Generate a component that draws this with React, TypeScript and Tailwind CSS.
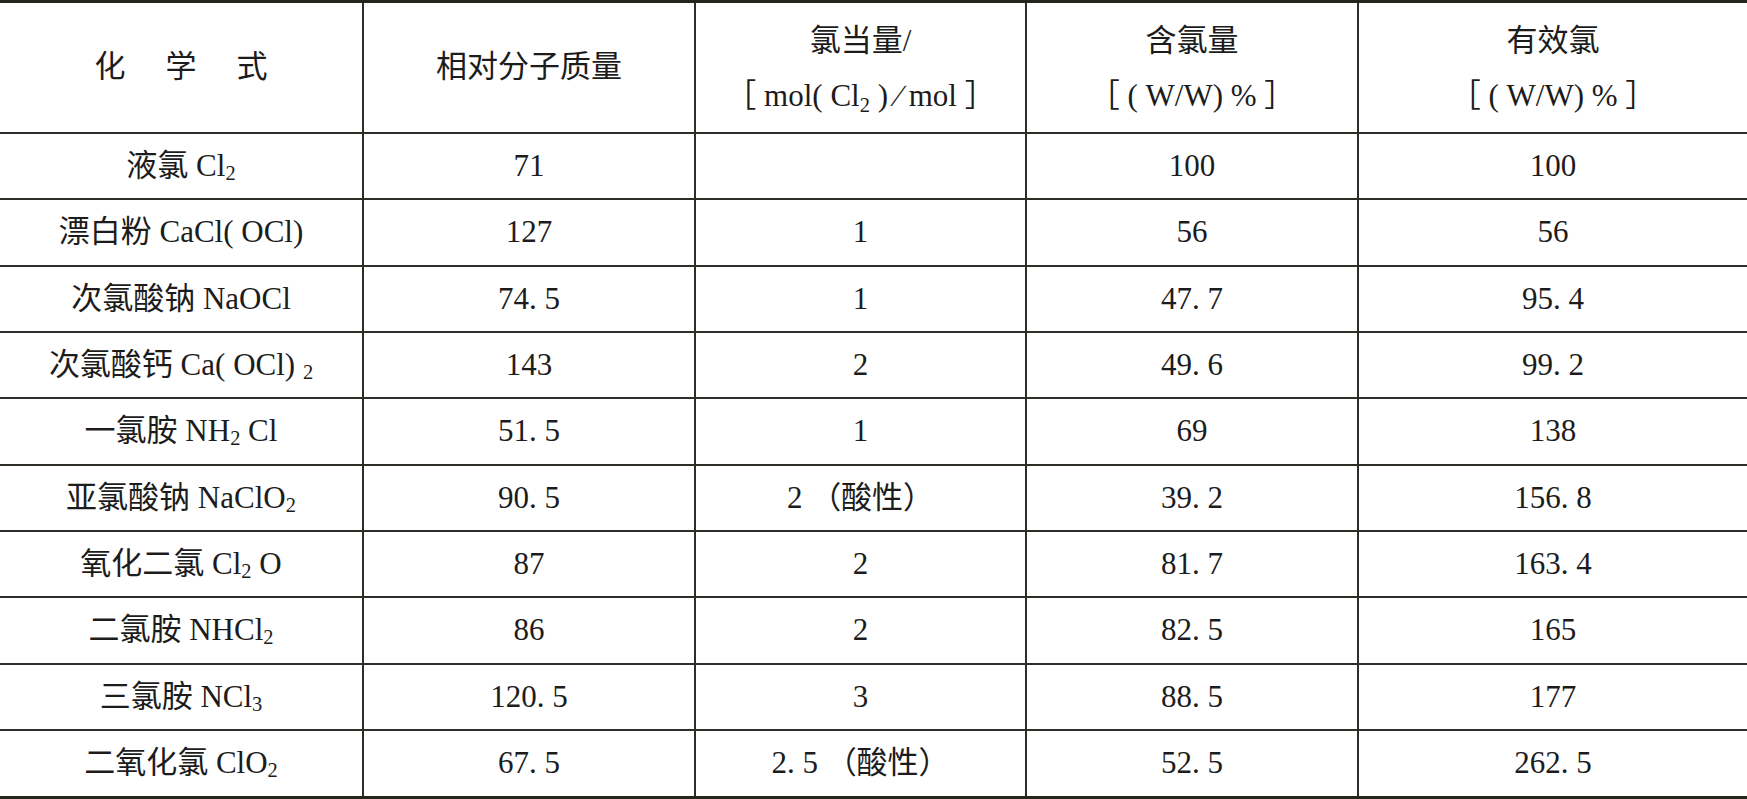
import React from 'react';

type Cell = React.ReactNode;

function Sub({ children }: { children: React.ReactNode }) {
  return <span className="relative top-[0.34em] text-[0.66em] leading-none">{children}</span>;
}

const rows: Cell[][] = [
  [<>液氯 Cl<Sub>2</Sub></>, '71', '', '100', '100'],
  ['漂白粉 CaCl( OCl)', '127', '1', '56', '56'],
  ['次氯酸钠 NaOCl', '74. 5', '1', '47. 7', '95. 4'],
  [<>次氯酸钙 Ca( OCl) <Sub>2</Sub></>, '143', '2', '49. 6', '99. 2'],
  [<>一氯胺 NH<Sub>2</Sub> Cl</>, '51. 5', '1', '69', '138'],
  [<>亚氯酸钠 NaClO<Sub>2</Sub></>, '90. 5', '2 （酸性）', '39. 2', '156. 8'],
  [<>氧化二氯 Cl<Sub>2</Sub> O</>, '87', '2', '81. 7', '163. 4'],
  [<>二氯胺 NHCl<Sub>2</Sub></>, '86', '2', '82. 5', '165'],
  [<>三氯胺 NCl<Sub>3</Sub></>, '120. 5', '3', '88. 5', '177'],
  [<>二氧化氯 ClO<Sub>2</Sub></>, '67. 5', '2. 5 （酸性）', '52. 5', '262. 5'],
];

const headers: Cell[] = [
  <div className="flex gap-[40px]">
    <span>化</span>
    <span>学</span>
    <span>式</span>
  </div>,
  '相对分子质量',
  <div className="flex flex-col items-center leading-[55px]">
    <span>氯当量/</span>
    <span>
      ［ mol( Cl<Sub>2</Sub> ) ∕ mol ］
    </span>
  </div>,
  <div className="flex flex-col items-center leading-[55px]">
    <span>含氯量</span>
    <span>［ ( W/W) % ］</span>
  </div>,
  <div className="flex flex-col items-center leading-[55px]">
    <span>有效氯</span>
    <span>［ ( W/W) % ］</span>
  </div>,
];

export default function App() {
  return (
    <div className="w-[1747px] h-[799px] bg-white border-t-[3px] border-b-[3px] border-[#26261c] font-['Liberation_Serif','Noto_Sans_CJK_SC',serif] text-[31px] text-[#1c1c1c]">
      <div className="grid h-full grid-cols-[364px_332px_331px_332px_1fr] grid-rows-[131px_repeat(9,66.33px)_1fr]">
        {headers.map((h, i) => (
          <div
            key={`h${i}`}
            className={`flex items-center justify-center whitespace-pre border-b-2 border-[#2e2e28] ${i < 4 ? 'border-r-2' : ''}`}
          >
            {h}
          </div>
        ))}
        {rows.map((row, r) =>
          row.map((c, i) => (
            <div
              key={`${r}-${i}`}
              className={`flex items-center justify-center whitespace-pre border-[#2e2e28] ${
                r < rows.length - 1 ? 'border-b-2' : ''
              } ${i < 4 ? 'border-r-2' : ''}`}
            >
              {c}
            </div>
          ))
        )}
      </div>
    </div>
  );
}
